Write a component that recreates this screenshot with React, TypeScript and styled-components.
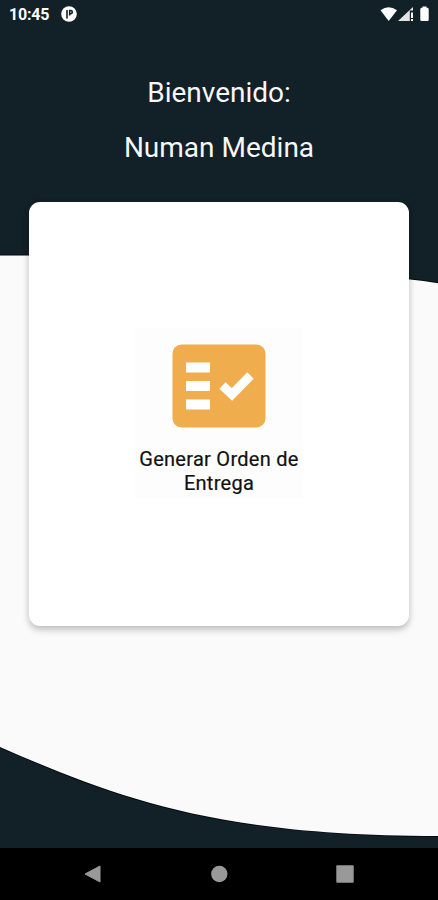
import React from "react";
import styled, { createGlobalStyle } from "styled-components";

const GlobalStyle = createGlobalStyle`
  * { box-sizing: border-box; }
  body { margin: 0; background: #000; font-family: Roboto, sans-serif; }
`;

const Screen = styled.div`
  position: relative;
  isolation: isolate;
  width: 438px;
  height: 900px;
  display: flex;
  flex-direction: column;
  overflow: hidden;
  background: #122028;
`;

const Backdrop = styled.svg`
  position: absolute;
  inset: 0;
  z-index: -1;
`;

const StatusBar = styled.header`
  display: flex;
  align-items: center;
  height: 28px;
  padding: 0 8px 0 9px;
  color: #fff;
`;

const Clock = styled.span`
  font-size: 16px;
  font-weight: 700;
  line-height: 28px;
  padding-top: 2px;
  letter-spacing: -0.2px;
  margin-right: 12px;
`;

const StatusIcons = styled.div`
  display: flex;
  margin-left: auto;
`;

const Greeting = styled.div`
  display: flex;
  flex-direction: column;
  align-items: center;
  gap: 21px;
  margin-top: 48px;
  color: #f7f7f5;
`;

const GreetingLine = styled.h1`
  margin: 0;
  font-size: 28px;
  font-weight: 400;
  line-height: 34px;
  white-space: nowrap;
`;

const Card = styled.main`
  display: flex;
  align-items: center;
  justify-content: center;
  width: 380px;
  height: 424px;
  margin: 37px 0 0 29px;
  padding-bottom: 2px;
  border-radius: 11px;
  background: #fff;
  box-shadow: 0 4px 7px rgba(0, 0, 0, 0.2), 0 1px 6px rgba(0, 0, 0, 0.08);
`;

const ActionTile = styled.button`
  display: flex;
  flex-direction: column;
  align-items: center;
  width: 168px;
  height: 170px;
  padding: 16px 0 0;
  border: 0;
  background: #fdfdfd;
  font-family: inherit;
`;

const ActionLabel = styled.span`
  width: 168px;
  margin-top: 19px;
  font-size: 20px;
  font-weight: 400;
  line-height: 24px;
  letter-spacing: 0.28px;
  color: #111;
  -webkit-text-stroke: 0.2px #111;
`;

const NavBar = styled.nav`
  display: grid;
  grid-template-columns: repeat(3, 126px);
  justify-content: center;
  justify-items: center;
  align-items: center;
  height: 52px;
  margin-top: auto;
  background: #000;
`;

const Waves = () => (
  <Backdrop width="438" height="900" viewBox="0 0 438 900">
    <path
      d="M-2 255.500H260C330 260 370 274 410 279.500Q424 281 440 283.500V836H438C215 836 115 797 0 747L-2 746Z"
      fill="#fafafa"
      stroke="#030a0e"
      strokeWidth="2"
      paintOrder="stroke"
    />
  </Backdrop>
);

const NotificationIcon = () => (
  <svg width="16" height="16" viewBox="0 0 16 16">
    <circle cx="8" cy="8" r="7.800" fill="#fff" />
    <path d="M6 4v8.500M8.700 9.500V4.500h1a1.600 1.600 0 0 1 0 3.200H8.700" fill="none" stroke="#122028" strokeWidth="1.600" />
  </svg>
);

const ChecklistIcon = () => (
  <svg width="94" height="84" viewBox="0 0 94 84">
    <rect x="0.500" y="0.500" width="93" height="83" rx="9" fill="#f0ad4e" />
    <path d="M14 18.500h24v10H14zM14 37h24v10H14zM14 55.500h24v10H14z" fill="#fff" />
    <path d="M50.500 41.500 60 50.500 78.500 31.500" fill="none" stroke="#fff" strokeWidth="9" />
  </svg>
);

export default function App() {
  return (
    <>
      <GlobalStyle />
      <Screen>
        <Waves />
        <StatusBar>
          <Clock>10:45</Clock>
          <NotificationIcon />
          <StatusIcons>
            <svg width="50" height="18" viewBox="0 0 50 18" fill="#fff">
              <path d="M0.500 5.300Q8.500-1 17 5.300L8.700 16Z" />
              <path d="M18 16 33 2v3.500h-3.200V16Z" fill="#e2e4e5" />
              <path d="M31 7.500h2V13h-2zM31 14h2v2h-2z" />
              <path d="M42.500 1.500h4v1.200h1q1.200.3 1.200 1.500v10.600q0 1.200-1.200 1.200h-6q-1.200 0-1.200-1.200V4.200q0-1.200 1.200-1.500h1Z" />
            </svg>
          </StatusIcons>
        </StatusBar>
        <Greeting>
          <GreetingLine>Bienvenido:</GreetingLine>
          <GreetingLine as="h2">Numan Medina</GreetingLine>
        </Greeting>
        <Card>
          <ActionTile>
            <ChecklistIcon />
            <ActionLabel>Generar Orden de Entrega</ActionLabel>
          </ActionTile>
        </Card>
        <NavBar>
          <svg width="18" height="18" viewBox="0 0 18 18">
            <path d="M16 1v16L1 9Z" fill="#999" stroke="#999" strokeLinejoin="round" />
          </svg>
          <svg width="18" height="18" viewBox="0 0 18 18">
            <circle cx="9.300" cy="9" r="8.200" fill="#999" />
          </svg>
          <svg width="18" height="18" viewBox="0 0 18 18">
            <rect x="0.300" y="0.300" width="17.400" height="17.400" rx="1" fill="#999" />
          </svg>
        </NavBar>
      </Screen>
    </>
  );
}
